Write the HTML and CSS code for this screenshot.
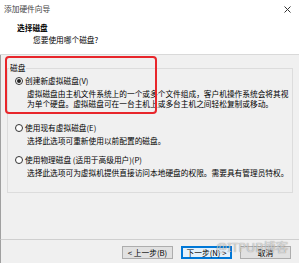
FILE: index.html
```html
<!DOCTYPE html>
<html lang="zh-CN">
<head>
    <meta charset="UTF-8">
    <meta name="viewport" content="width=device-width, initial-scale=1.0">
    <title>添加硬件向导</title>
    <link rel="stylesheet" href="styles.css">
</head>
<body>

    <div class="wizard">
        <!-- White header with title and step caption -->
        <div class="header">
            <div class="titlebar">
                <span class="title">添加硬件向导</span>
                <svg class="close" width="7" height="7" viewBox="0 0 7 7">
                    <path d="M0.5 0.5 L6.5 6.5 M6.5 0.5 L0.5 6.5" stroke="#333" stroke-width="1" fill="none"/>
                </svg>
            </div>
            <div class="heading">选择磁盘</div>
            <div class="subheading">您要使用哪个磁盘?</div>
        </div>

        <!-- Disk choice -->
        <div class="content">
            <fieldset class="group">
                <legend>磁盘</legend>

                <div class="option option-new">
                    <label class="radio-row"><span class="radio checked"></span>创建新虚拟磁盘(V)</label>
                    <p class="desc">虚拟磁盘由主机文件系统上的一个或多个文件组成，客户机操作系统会将其视<br>为单个硬盘。虚拟磁盘可在一台主机上或多台主机之间轻松复制或移动。</p>
                </div>

                <div class="option option-existing">
                    <label class="radio-row"><span class="radio"></span>使用现有虚拟磁盘(E)</label>
                    <p class="desc">选择此选项可重新使用以前配置的磁盘。</p>
                </div>

                <div class="option">
                    <label class="radio-row"><span class="radio"></span>使用物理磁盘 (适用于高级用户)(P)</label>
                    <p class="desc">选择此选项可为虚拟机提供直接访问本地硬盘的权限。需要具有管理员特权。</p>
                </div>
            </fieldset>
        </div>

        <!-- Wizard buttons -->
        <div class="footer">
            <button type="button">&lt; 上一步(B)</button>
            <button type="button" class="focused">下一步(N) &gt;</button>
            <button type="button">取消</button>
        </div>

        <!-- Annotation and watermark lying over the dialog -->
        <div class="highlight"></div>
        <div class="watermark">@ITPUB博客</div>
    </div>

</body>
</html>
```

FILE: styles.css
```css
/* General Styles */
body {
    margin: 0;
    padding: 0;
    font-family: "Noto Sans CJK SC", "Noto Sans", sans-serif;
    font-size: 7.7px;
    color: #000;
    background-color: #fff;
}

.wizard {
    position: relative;
    width: 299px;
    height: 263px;
    display: flex;
    flex-direction: column;
    overflow: hidden;
}

/* Header */
.header {
    background-color: #fff;
    border-bottom: 1px solid #d9d9d9;
    padding-bottom: 8px;
}

.titlebar {
    height: 18px;
    display: flex;
    align-items: center;
    justify-content: space-between;
    padding: 0 8px 0 4px;
}

.title {
    color: #444;
    line-height: 18px;
}

.heading {
    margin-top: 4px;
    padding-left: 17px;
    line-height: 12px;
    font-weight: bold;
}

.subheading {
    padding-left: 33px;
    line-height: 12px;
}

/* Body */
.content {
    flex: 1;
    background-color: #f0f0f0;
    border-left: 1px solid #a0a0a0;
}

.group {
    margin: 7px 6px 0 6px;
    padding: 1px 0 14px 7px;
    border: 1px solid #dcdcdc;
    min-width: 0;
}

.group legend {
    padding: 0 1px;
    margin-left: -6px;
    line-height: 12px;
}

.option-new {
    margin-bottom: 13px;
}

.option-existing {
    margin-bottom: 8px;
}

.radio-row {
    display: flex;
    align-items: center;
    height: 12px;
    line-height: 12px;
}

.radio {
    position: relative;
    width: 8px;
    height: 8px;
    box-sizing: border-box;
    border: 1px solid #333;
    border-radius: 50%;
    background-color: #fff;
    margin-right: 2px;
}

.radio.checked::after {
    content: "";
    position: absolute;
    left: 1px;
    top: 1px;
    width: 4px;
    height: 4px;
    border-radius: 50%;
    background-color: #222;
}

.desc {
    margin: 2px 0 0 0;
    padding-left: 12px;
    line-height: 10px;
    white-space: nowrap;
}

/* Footer */
.footer {
    height: 24px;
    box-sizing: border-box;
    background-color: #f0f0f0;
    border-top: 1px solid #cfcfcf;
    border-left: 1px solid #a0a0a0;
    display: flex;
    justify-content: flex-end;
    align-items: flex-start;
    gap: 8px;
    padding: 6px 8px 0 0;
}

button {
    width: 51px;
    height: 13px;
    padding: 0;
    font-family: inherit;
    font-size: 7.7px;
    line-height: 11px;
    color: #000;
    background-color: #e1e1e1;
    border: 1px solid #adadad;
    border-radius: 0;
}

button.focused {
    border-color: #0078d7;
    box-shadow: inset 0 0 0 1px #0078d7;
    background-color: #e5f1fb;
}

/* Overlays */
.highlight {
    position: absolute;
    left: 5px;
    top: 56px;
    width: 152px;
    height: 58px;
    box-sizing: border-box;
    border: 2px solid #e8262b;
    border-radius: 4px;
}

.watermark {
    position: absolute;
    left: 216px;
    top: 240px;
    font-family: "Noto Sans", "Noto Sans CJK SC", sans-serif;
    font-size: 12.5px;
    line-height: 16px;
    color: rgba(245, 245, 245, 0.7);
    text-shadow: 0 0 1px rgba(0, 0, 0, 0.5);
    white-space: nowrap;
}
```
